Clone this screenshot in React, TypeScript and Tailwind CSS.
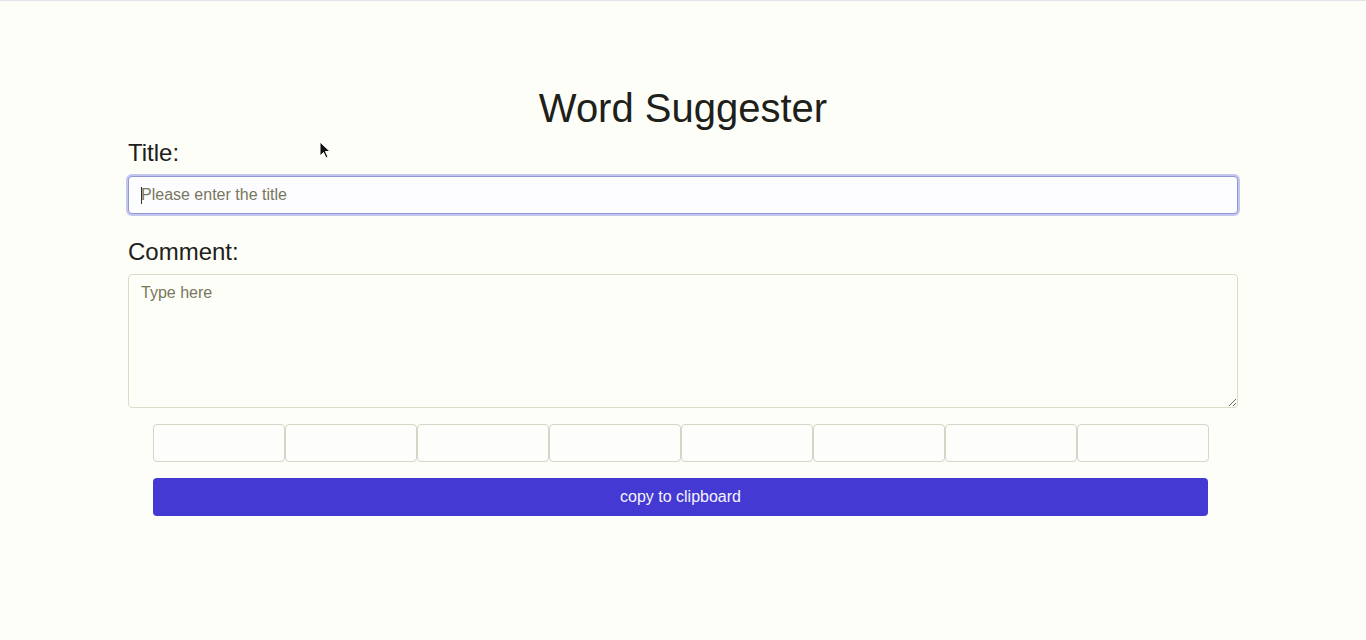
import React from 'react';

export default function App() {
  const boxes = Array.from({ length: 8 }, (_, i) => i);

  return (
    <div className="relative min-h-[640px] w-full bg-[#fefef9] font-['Liberation_Sans',Arial,sans-serif] text-[#20201a]">
      <div className="h-px w-full bg-[#e4e4ee]" />
      <div className="mx-auto w-[1110px] pt-[83px]">
        <h1 className="text-center text-[40px] leading-[48px]">Word Suggester</h1>

        <label className="mt-[7px] block text-[24px] leading-[28px]">Title:</label>
        <div className="relative mt-[9px]">
          <input
            className="h-[38px] w-full rounded-[4px] border border-[#8f97d4] bg-[#fdfdff] px-3 text-[16px] shadow-[0_0_0_2px_#c3c6ee] outline-none placeholder:text-[#77775c]"
            placeholder="Please enter the title"
          />
          <span className="absolute left-[13px] top-[11px] h-[17px] w-px bg-[#333]" />
        </div>

        <label className="mt-[24px] block text-[24px] leading-[28px]">Comment:</label>
        <textarea
          className="mt-[8px] block h-[134px] w-full rounded-[4px] border border-[#dcdcc8] bg-[#fefef9] px-3 py-[6px] text-[16px] outline-none placeholder:text-[#77775c]"
          placeholder="Type here"
        />

        <div className="ml-[25px] mt-[16px] flex w-[1056px]">
          {boxes.map(i => (
            <div key={i} className="h-[38px] w-[132px] rounded-[4px] border border-[#d6d6c6] bg-[#fdfdfb]" />
          ))}
        </div>

        <button className="ml-[25px] mt-[16px] block h-[38px] w-[1055px] rounded-[4px] bg-[#4439d2] text-[16px] text-[#f4f4ff]">
          copy to clipboard
        </button>
      </div>

      <svg className="absolute left-[319px] top-[141px]" width="12" height="19" viewBox="0 0 12 19">
        <path d="M1 1 L1 15 L4.5 11.5 L7 17 L9 16 L6.5 10.5 L11 10.5 Z" fill="#111" stroke="#fff" strokeWidth="1" />
      </svg>
    </div>
  );
}
